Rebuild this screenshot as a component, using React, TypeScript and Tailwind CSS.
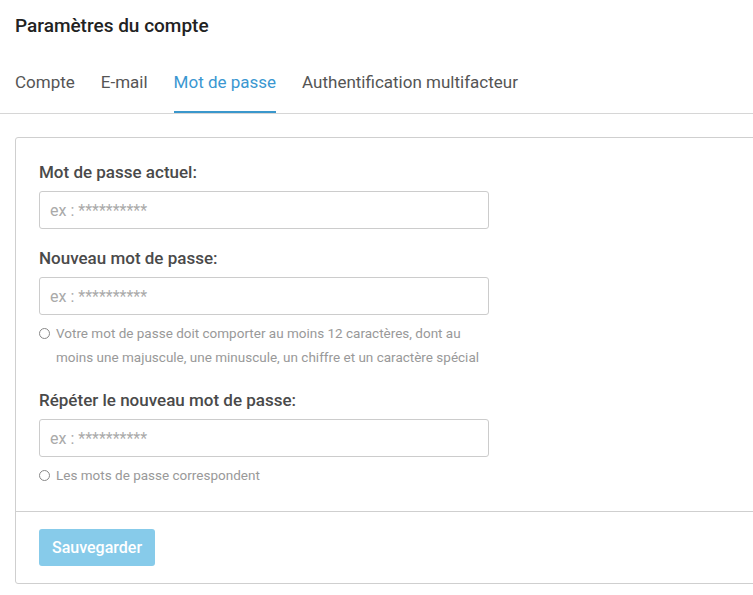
import React, { useState } from 'react';

const font = { fontFamily: 'Roboto, "Liberation Sans", sans-serif' };

const tabs = ['Compte', 'E-mail', 'Mot de passe', 'Authentification multifacteur'];

const Field = ({ label, hint }: { label: string; hint?: string }) => (
  <div className="w-[450px]">
    <div className="text-[17px] leading-[24px] font-medium text-[#4a4a4a]">{label}</div>
    <input
      type="password"
      placeholder="ex : **********"
      className="mt-[7px] block w-[450px] h-[38px] px-[10px] border border-[#ccc] rounded-[3px] text-[16px] text-[#444] placeholder:text-[#aaa] outline-none"
    />
    {hint && (
      <div className="mt-[6px] flex items-start text-[13.5px] leading-[24px] text-[#999]">
        <span className="mt-[7px] mr-[6px] w-[11px] h-[11px] shrink-0 rounded-full border border-[#888]" />
        <span>{hint}</span>
      </div>
    )}
  </div>
);

export default function App() {
  const [active, setActive] = useState(2);

  return (
    <div className="w-[753px] h-[595px] overflow-hidden bg-white" style={font}>
      <div className="px-[15px] pt-[13px] text-[19px] leading-[26px] font-medium text-[#222]">
        Paramètres du compte
      </div>

      <div className="mt-[31px] border-b border-[#d6d6d6]">
        <div className="flex gap-[26px] px-[15px]">
          {tabs.map((t, i) => (
            <button
              key={t}
              onClick={() => setActive(i)}
              className={
                i === active
                  ? 'pb-[17px] border-b-[2px] border-[#3a97cc] text-[17px] leading-[24px] text-[#3a97d1]'
                  : 'pb-[17px] border-b-[2px] border-transparent text-[17px] leading-[24px] text-[#555]'
              }
            >
              {t}
            </button>
          ))}
        </div>
      </div>

      <div className="ml-[15px] mt-[23px] w-[800px] border border-[#cfcfcf] rounded-[3px]">
        <div className="px-[23px] pt-[22px] pb-[24px] flex flex-col">
          <Field label="Mot de passe actuel:" />
          <div className="mt-[17px]">
            <Field
              label="Nouveau mot de passe:"
              hint="Votre mot de passe doit comporter au moins 12 caractères, dont au moins une majuscule, une minuscule, un chiffre et un caractère spécial"
            />
          </div>
          <div className="mt-[19px]">
            <Field label="Répéter le nouveau mot de passe:" hint="Les mots de passe correspondent" />
          </div>
        </div>
        <div className="border-t border-[#cfcfcf] px-[23px] pt-[17px] pb-[17px]">
          <button className="h-[37px] w-[116px] rounded-[3px] bg-[#87cbea] text-white text-[16px] font-medium">
            Sauvegarder
          </button>
        </div>
      </div>
    </div>
  );
}
